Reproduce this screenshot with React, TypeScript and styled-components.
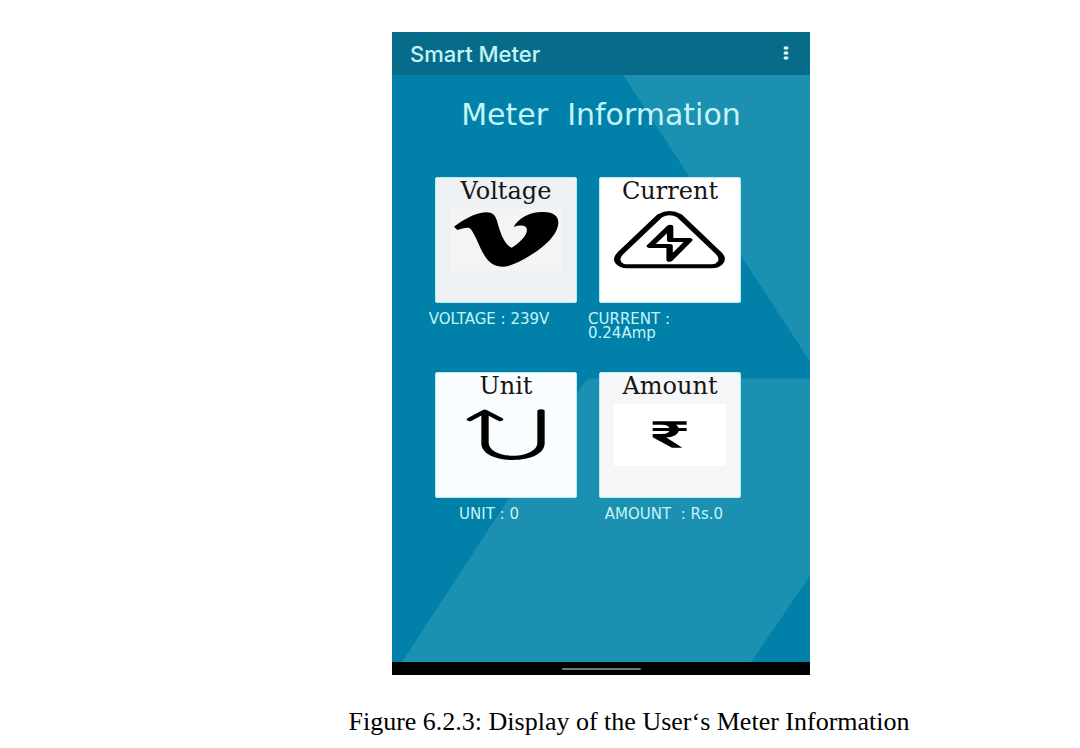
import React from "react";
import styled, { createGlobalStyle } from "styled-components";

const GlobalStyle = createGlobalStyle`
  * { box-sizing: border-box; }
  body { margin: 0; background: #fff; }
`;

const Page = styled.main`
  display: flex;
  justify-content: center;
  padding: 32px 0 0 178px;
`;

const Figure = styled.figure`
  margin: 0;
  width: 100%;
  display: flex;
  flex-direction: column;
  align-items: center;
`;

const Phone = styled.div`
  width: 100%;
  max-width: 418px;
  margin-right: 56px;
  font-family: "DejaVu Sans", sans-serif;
  color: #c4f4f8;
`;

const AppBar = styled.header`
  display: flex;
  align-items: center;
  justify-content: space-between;
  height: 43px;
  padding: 0 14px 0 18px;
  background: #066c8a;
`;

const AppTitle = styled.span`
  font-family: Inter, sans-serif;
  font-size: 22px;
  line-height: 24px;
  font-weight: 500;
`;

const MenuButton = styled.button`
  display: flex;
  padding: 0;
  border: 0;
  background: none;
  color: #e0fafa;
  cursor: pointer;
`;

const Screen = styled.section`
  position: relative;
  isolation: isolate;
  padding: 22px 0 136px;
  background: #0181aa;
`;

const Backdrop = styled.svg`
  position: absolute;
  inset: 0;
  z-index: -1;
  width: 100%;
  height: 100%;
`;

const Heading = styled.h1`
  margin: 0 0 44px;
  font-size: 30px;
  line-height: 36px;
  font-weight: 400;
  text-align: center;
  white-space: pre;
`;

const Cards = styled.div`
  display: flex;
  justify-content: center;
  gap: 22px;
  padding-right: 26px;
`;

const Card = styled.article<{ $bg: string }>`
  display: flex;
  flex-direction: column;
  align-items: center;
  width: 142px;
  height: 126px;
  border: 1px solid #b4edf4;
  border-radius: 2px;
  background: ${(p) => p.$bg};
`;

const CardTitle = styled.h2`
  margin: 0 0 5px;
  font-family: "DejaVu Serif", serif;
  font-size: 24px;
  line-height: 26px;
  font-weight: 400;
  color: #151515;
`;

const Tile = styled.svg<{ $bg: string }>`
  flex: none;
  width: 112px;
  height: 62px;
  background: ${(p) => p.$bg};
`;

const Readings = styled.div`
  display: grid;
  grid-template-columns: repeat(2, 175px);
  justify-content: center;
  justify-items: center;
  height: 69px;
  padding: 9px 49px 0 0;
`;

const Reading = styled.p`
  margin: 0;
  max-width: 152px;
  font-size: 15px;
  line-height: 14px;
  white-space: pre-wrap;
`;

const LastReadings = styled(Readings)`
  height: 28px;
`;

const NavBar = styled.div`
  display: flex;
  justify-content: center;
  align-items: center;
  height: 13px;
  background: #000;
`;

const NavHandle = styled.div`
  width: 79px;
  height: 2px;
  border-radius: 1px;
  background: #777;
`;

const Caption = styled.figcaption`
  margin-top: 32px;
  font-family: "Liberation Serif", serif;
  font-size: 26px;
  line-height: 30px;
  color: #000;
`;

export default function App() {
  return (
    <Page>
      <GlobalStyle />
      <Figure>
        <Phone>
          <AppBar>
            <AppTitle>Smart Meter</AppTitle>
            <MenuButton aria-label="More options">
              <svg width="20" height="20" viewBox="0 0 20 20" fill="currentColor">
                <ellipse cx="10" cy="4" rx="2.5" ry="1.8" />
                <ellipse cx="10" cy="9" rx="2.5" ry="1.8" />
                <ellipse cx="10" cy="14" rx="2.5" ry="1.8" />
              </svg>
            </MenuButton>
          </AppBar>
          <Screen>
            <Backdrop viewBox="0 0 418 586" preserveAspectRatio="none" aria-hidden="true">
              <path d="M231 0H418V286Z" fill="#1b90b1" />
              <path d="M200 303H418V500L359 586H10L191 309Q195 303 200 303Z" fill="#1b90b1" />
            </Backdrop>
            <Heading>{"Meter  Information"}</Heading>
            <Cards>
              <Card $bg="#eef1f3">
                <CardTitle>Voltage</CardTitle>
                <Tile $bg="#f4f4f4" viewBox="75 132 336 186" aria-hidden="true">
                  <path d="M87 185C112 167 150 143 183 142C204 142 211 151 216 168C224 196 235 237 260 248C282 235 305 214 306 195C305 181 289 178 266 186C281 159 313 140 356 141C386 141 400 153 400 174C398 210 358 246 313 273C284 291 255 305 231 305C206 304 191 292 178 271C163 246 153 213 137 192C130 184 112 191 97 195Z" />
                </Tile>
              </Card>
              <Card $bg="#fff">
                <CardTitle>Current</CardTitle>
                <Tile $bg="#fff" viewBox="102 132 336 186" fill="none" stroke="#000" aria-hidden="true">
                  <g transform="scale(1.6 1)">
                    <path d="M150 152Q168 137 186 152L261 266C272 286 261 304 247 304H89C74 304 63 286 75 266Z" strokeWidth="12" />
                    <path d="M169 185L131 243H168V284L205 225H169Z" strokeWidth="12" strokeLinejoin="round" />
                  </g>
                </Tile>
              </Card>
            </Cards>
            <Readings>
              <Reading>VOLTAGE : 239V</Reading>
              <Reading>CURRENT : 0.24Amp</Reading>
            </Readings>
            <Cards>
              <Card $bg="#f9fdff">
                <CardTitle>Unit</CardTitle>
                <Tile $bg="#f9fdff" viewBox="75 132 336 186" fill="none" stroke="#000" strokeLinecap="round" aria-hidden="true">
                  <path d="M84 178L112 154L141 178" transform="scale(1.6 1)" strokeWidth="11" strokeLinejoin="round" />
                  <path d="M169 155H191V248C191 270 222 287 264 287C306 287 337 270 337 248V153Q337 148 348 148Q359 148 359 153V250C359 283 314 300 264 300C214 300 169 283 169 250Z" fill="#000" stroke="none" />
                </Tile>
              </Card>
              <Card $bg="#f5f6f7">
                <CardTitle>Amount</CardTitle>
                <Tile $bg="#fff" viewBox="102 132 336 186" aria-hidden="true">
                  <path d="M218 184H320V194H288Q294 198 296 204H320V213H296C292 226 276 232 258 232L307 263H276L218 232V222H244C258 222 265 219 268 213H218V204H268C265 197 258 194 246 194H218Z" />
                </Tile>
              </Card>
            </Cards>
            <LastReadings>
              <Reading>UNIT : 0</Reading>
              <Reading>{"AMOUNT  : Rs.0"}</Reading>
            </LastReadings>
          </Screen>
          <NavBar>
            <NavHandle />
          </NavBar>
        </Phone>
        <Caption>Figure 6.2.3: Display of the User‘s Meter Information</Caption>
      </Figure>
    </Page>
  );
}
